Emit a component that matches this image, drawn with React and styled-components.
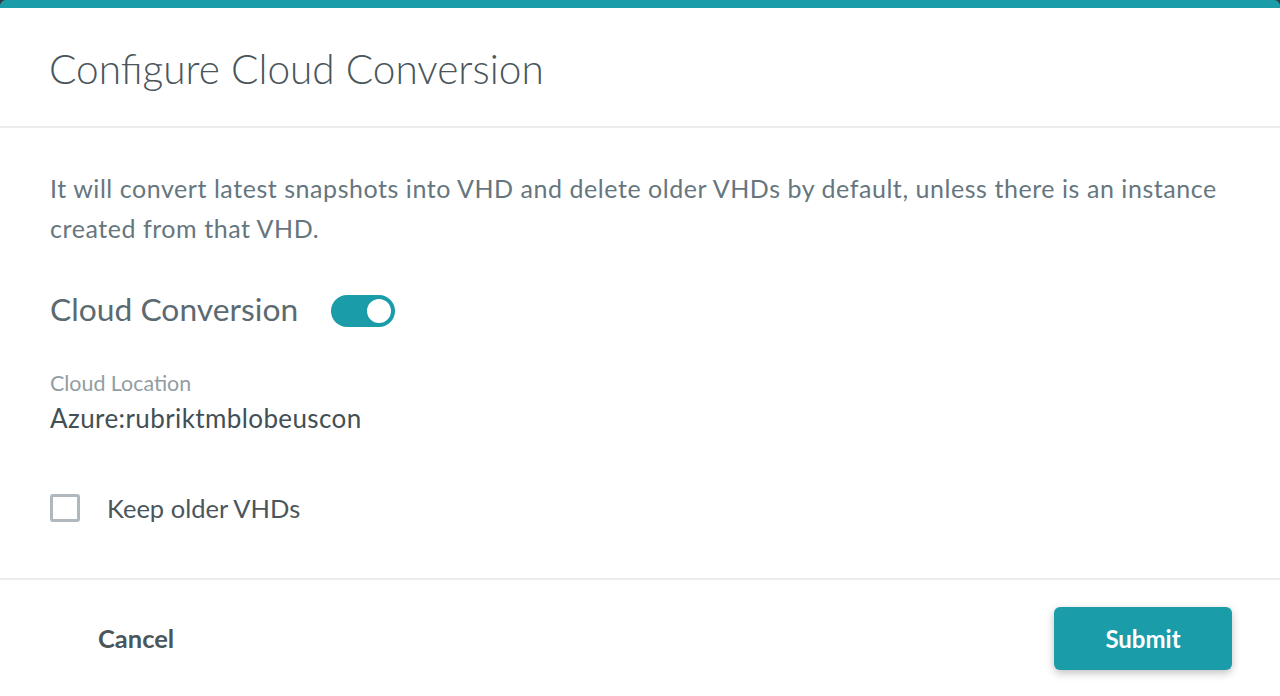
import React, { useState } from "react";
import styled, { createGlobalStyle } from "styled-components";

const GlobalStyle = createGlobalStyle`
  html, body {
    margin: 0;
    padding: 0;
    background: #2f3a40;
  }
  body {
    font-family: Lato, "Open Sans", "Liberation Sans", sans-serif;
  }
  * { box-sizing: border-box; }
`;

const teal = "#1a9ca9";

const Modal = styled.div`
  width: 1280px;
  height: 696px;
  background: #fff;
  border-top: 8px solid ${teal};
  border-radius: 6px 6px 0 0;
  display: flex;
  flex-direction: column;
  overflow: hidden;
`;

const Header = styled.div`
  height: 120px;
  padding: 0 49px;
  display: flex;
  align-items: center;
  border-bottom: 2px solid #ececec;
`;

const Title = styled.h1`
  margin: 0;
  margin-top: 2px;
  font-size: 40.6px;
  font-weight: 300;
  color: #4a565c;
`;

const Body = styled.div`
  flex: 1;
  padding: 40px 50px 0;
  display: flex;
  flex-direction: column;
  border-bottom: 2px solid #ececec;
`;

const Intro = styled.p`
  margin: 0;
  font-size: 25px;
  letter-spacing: 0.55px;
  line-height: 40px;
  color: #66767e;
`;

const SwitchRow = styled.div`
  margin-top: 42px;
  display: flex;
  align-items: center;
  gap: 33px;
`;

const SwitchLabel = styled.span`
  font-size: 31.8px;
  color: #5b6a71;
`;

const Track = styled.button`
  width: 64px;
  height: 32px;
  border-radius: 16px;
  border: none;
  padding: 2px;
  margin-top: 4px;
  background: ${(p) => (p.$on ? teal : "#c4cdd1")};
  display: flex;
  justify-content: ${(p) => (p.$on ? "flex-end" : "flex-start")};
  cursor: pointer;
`;

const Knob = styled.span`
  width: 28px;
  height: 28px;
  border-radius: 50%;
  background: #fff;
  border: 2px solid ${teal};
`;

const Field = styled.div`
  margin-top: 42px;
  display: flex;
  flex-direction: column;
  gap: 6px;
`;

const FieldLabel = styled.span`
  font-size: 21.4px;
  color: #929da2;
`;

const FieldValue = styled.span`
  font-size: 26px;
  letter-spacing: 0.4px;
  color: #434f55;
`;

const CheckRow = styled.label`
  margin-top: 59px;
  display: flex;
  align-items: center;
  gap: 27px;
  cursor: pointer;
`;

const Box = styled.span`
  width: 30px;
  height: 28px;
  border: 3px solid #aeb8bd;
  border-radius: 3px;
  background: ${(p) => (p.$checked ? teal : "#fff")};
`;

const CheckText = styled.span`
  font-size: 25.5px;
  color: #4a565c;
`;

const Footer = styled.div`
  height: 116px;
  padding: 0 48px 0 98px;
  display: flex;
  align-items: center;
  justify-content: space-between;
`;

const CancelButton = styled.button`
  background: none;
  border: none;
  padding: 0;
  font-family: inherit;
  font-size: 25.5px;
  font-weight: 700;
  color: #4a565c;
  cursor: pointer;
`;

const SubmitButton = styled.button`
  width: 178px;
  height: 63px;
  border: none;
  border-radius: 6px;
  background: ${teal};
  color: #fff;
  font-family: inherit;
  font-size: 24px;
  font-weight: 700;
  box-shadow: 0 3px 8px rgba(0, 0, 0, 0.25);
  cursor: pointer;
`;

export default function App() {
  const [on, setOn] = useState(true);
  const [keep, setKeep] = useState(false);
  return (
    <>
      <GlobalStyle />
      <Modal>
        <Header>
          <Title>Configure Cloud Conversion</Title>
        </Header>
        <Body>
          <Intro>
            It will convert latest snapshots into VHD and delete older VHDs by
            default, unless there is an instance created from that VHD.
          </Intro>
          <SwitchRow>
            <SwitchLabel>Cloud Conversion</SwitchLabel>
            <Track $on={on} onClick={() => setOn(!on)}>
              <Knob />
            </Track>
          </SwitchRow>
          <Field>
            <FieldLabel>Cloud Location</FieldLabel>
            <FieldValue>Azure:rubriktmblobeuscon</FieldValue>
          </Field>
          <CheckRow onClick={() => setKeep(!keep)}>
            <Box $checked={keep} />
            <CheckText>Keep older VHDs</CheckText>
          </CheckRow>
        </Body>
        <Footer>
          <CancelButton>Cancel</CancelButton>
          <SubmitButton>Submit</SubmitButton>
        </Footer>
      </Modal>
    </>
  );
}
